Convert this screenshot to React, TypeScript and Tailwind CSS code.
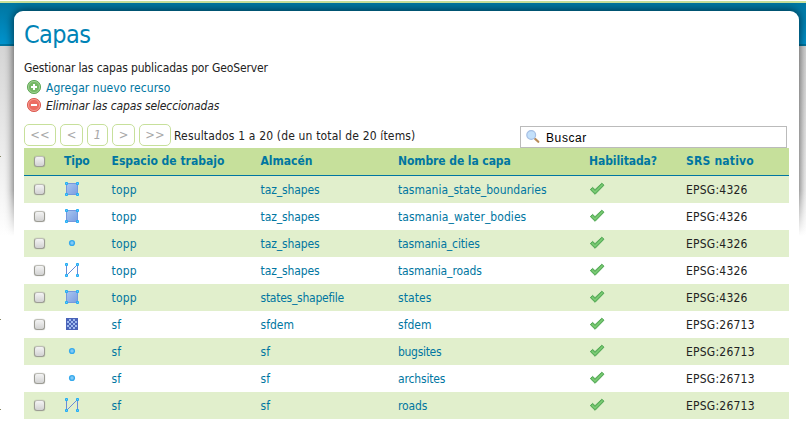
import React from "react";

type Kind = "polygon" | "point" | "line" | "raster";

const rows: [Kind, string, string, string, string, string, string][] = [
  ["polygon", "topp", "taz_shapes", "tasmania_state_boundaries", "EPSG:4326", "tracking-[-0.1px]", ""],
  ["polygon", "topp", "taz_shapes", "tasmania_water_bodies", "EPSG:4326", "tracking-[-0.1px]", "tracking-[0.05px]"],
  ["point", "topp", "taz_shapes", "tasmania_cities", "EPSG:4326", "tracking-[-0.1px]", "tracking-[-0.15px]"],
  ["line", "topp", "taz_shapes", "tasmania_roads", "EPSG:4326", "tracking-[-0.1px]", "tracking-[-0.12px]"],
  ["polygon", "topp", "states_shapefile", "states", "EPSG:4326", "tracking-[-0.25px]", "tracking-[0.1px]"],
  ["raster", "sf", "sfdem", "sfdem", "EPSG:26713", "", ""],
  ["point", "sf", "sf", "bugsites", "EPSG:26713", "", "tracking-[-0.3px]"],
  ["point", "sf", "sf", "archsites", "EPSG:26713", "", "tracking-[-0.15px]"],
  ["line", "sf", "sf", "roads", "EPSG:26713", "", "tracking-[-0.15px]"],
];

const corners = [
  [2.5, 2.5],
  [13.5, 2.5],
  [2.5, 13.5],
  [13.5, 13.5],
];

function Corners() {
  return (
    <>
      {corners.map(([x, y]) => (
        <rect key={`${x}-${y}`} x={x - 1.5} y={y - 1.5} width="3" height="3" rx="0.9" fill="#22adf5" />
      ))}
      {corners.map(([x, y]) => (
        <rect key={`c${x}-${y}`} x={x - 0.5} y={y - 0.5} width="1" height="1" fill="#6ccafa" />
      ))}
    </>
  );
}

function TypeIcon({ kind }: { kind: Kind }) {
  return (
    <svg className="block h-4 w-4" viewBox="0 0 16 16">
      <defs>
        <linearGradient id="area" x1="0" y1="0" x2="1" y2="1">
          <stop offset="0" stopColor="#a9c6f1" />
          <stop offset="1" stopColor="#7b9de0" />
        </linearGradient>
      </defs>
      {kind === "polygon" && (
        <>
          <rect x="2.5" y="2.5" width="11" height="11" fill="url(#area)" stroke="#7797dc" />
          <Corners />
        </>
      )}
      {kind === "line" && (
        <>
          <path d="M2.5 2.5V13.5L13.5 2.5V13.5" fill="none" stroke="#6a8bd6" strokeWidth="1" />
          <Corners />
        </>
      )}
      {kind === "point" && (
        <>
          <circle cx="8" cy="8" r="3.1" fill="#35a9ec" />
          <circle cx="8" cy="8" r="1.7" fill="#80c9f6" />
        </>
      )}
      {kind === "raster" && (
        <>
          <rect x="2" y="2" width="12" height="12" fill="#4a63b8" />
          {[0, 1, 2, 3, 4].map((r) =>
            [0, 1, 2, 3, 4].map((c) =>
              (r + c) % 2 === 1 ? (
                <rect key={`${r}${c}`} x={3 + c * 2} y={3 + r * 2} width="2" height="2" fill="#9eb9ee" />
              ) : null,
            ),
          )}
        </>
      )}
    </svg>
  );
}

function Check() {
  return (
    <svg className="block h-4 w-4" viewBox="0 0 16 16">
      <path d="M1.3 8.6 3.6 6.4 6 8.7 12.8 2.2 15 4.2 6.1 13.3Z" fill="#69bd65" stroke="#46a04b" strokeWidth="0.9" />
      <path d="M3 8.3 6 11.2 13.5 3.8" fill="none" stroke="#8bd681" strokeWidth="0.8" />
    </svg>
  );
}

function RoundIcon({ add }: { add: boolean }) {
  return (
    <svg className="block h-4 w-4 shrink-0" viewBox="0 0 16 16">
      <circle cx="8" cy="8" r="6.6" fill={add ? "#76b866" : "#ec6c62"} stroke={add ? "#5ba553" : "#d9564d"} strokeWidth="0.9" />
      <circle cx="8" cy="8" r="5.6" fill="none" stroke={add ? "#a9d69c" : "#f5a49a"} strokeWidth="0.8" />
      <path d={add ? "M8 5V11M5 8H11" : "M5 8H11"} stroke="#fff" strokeWidth="2" />
    </svg>
  );
}

function Box() {
  return (
    <span className="block h-[11px] w-[11px] rounded-[3px] border border-[#9c9c94] border-t-[#bdbdb6] bg-linear-to-b from-[#f4f4f4] to-[#d2d2d2] shadow-[0_0_1px_rgba(0,0,0,0.35)]" />
  );
}

function Pager({ label, size }: { label: string; size: string }) {
  return (
    <span
      className={`${size} flex h-[22px] items-center justify-center rounded-[5px] border border-[#c7e09b] pt-px text-[11.5px] text-[#a8a8a8] italic [font-family:'DejaVu_Sans',sans-serif] [font-stretch:normal]`}
    >
      {label}
    </span>
  );
}

const grid = "grid grid-cols-[40px_47.5px_149px_137.5px_191px_97px_1fr] items-center";

export default function App() {
  return (
    <div className="relative h-[424px] w-[806px] overflow-hidden bg-white font-['DejaVu_Sans_Condensed','DejaVu_Sans',sans-serif] [font-stretch:condensed] text-[12px] text-[#222]">
      <div className="absolute inset-x-0 top-0">
        <div className="mt-px h-[2px] bg-[#c8e09a]" />
        <div className="h-[41px] bg-linear-to-b from-[#0076a1] to-[#0093cd]" />
        <div className="h-[2px] bg-[#0076a1]" />
        <div className="h-[190px] bg-linear-to-b from-[#d5d5d5] to-white" />
      </div>
      <div className="absolute inset-0 mask-[linear-gradient(to_bottom,black_190px,transparent_236px)]">
        <div className="mt-[11px] ml-[14px] h-[420px] w-[785px] rounded-[9px] shadow-[0_0_8px_1px_rgba(0,0,0,0.6)]" />
      </div>
      <div className="absolute top-[156px] left-0 h-px w-px bg-[#8a8a68]" />
      <div className="absolute top-[319px] left-0 h-px w-px bg-[#8a8a68]" />
      <div className="absolute top-[409px] left-0 h-px w-px bg-[#8a8a68]" />

      <main className="relative mt-[11px] ml-[14px] h-[413px] w-[785px] rounded-t-[9px] bg-white pr-[10px] pl-[10px]">
        <h1 className="h-[48px] pt-[8px] text-[25px] leading-[32px] tracking-[-0.6px] text-[#0083b6]">Capas</h1>
        <p className="h-[19px] leading-[18px] tracking-[-0.13px]">Gestionar las capas publicadas por GeoServer</p>
        <div className="flex h-[18px] items-center gap-[4px] pl-[2px] text-[#0076a1]">
          <RoundIcon add />
          <span className="pt-px tracking-[0.05px]">Agregar nuevo recurso</span>
        </div>
        <div className="flex h-[18px] items-center gap-[4px] pl-[2px] italic">
          <RoundIcon add={false} />
          <span className="pt-px tracking-[-0.13px]">Eliminar las capas seleccionadas</span>
        </div>
        <div className="flex h-[34px] pt-[10px]">
          <div className="flex gap-[4px]">
            <Pager label="<<" size="w-[32px]" />
            <Pager label="<" size="w-[23px]" />
            <Pager label="1" size="w-[21px]" />
            <Pager label=">" size="w-[23px]" />
            <Pager label=">>" size="w-[32px]" />
          </div>
          <span className="ml-[3px] pt-px leading-[22px] tracking-[0.16px] whitespace-nowrap">Resultados 1 a 20 (de un total de 20 ítems)</span>
          <div className="mt-[2px] mr-[2px] ml-auto flex h-[22px] w-[267px] items-center border border-[#bbb] pl-[4px] font-['Liberation_Sans',sans-serif] text-[12px] tracking-[0.6px] text-black">
            <svg className="h-4 w-4" viewBox="0 0 16 16">
              <path d="M10 9.8 13.3 12.8" stroke="#b98a56" strokeWidth="2.2" strokeLinecap="round" />
              <circle cx="6.2" cy="6" r="4.4" fill="#c3e0fa" stroke="#a5bfe4" strokeWidth="1.2" />
            </svg>
            <span className="ml-[5px] pt-px">Buscar</span>
          </div>
        </div>

        <section>
          <div className={`${grid} h-[28px] border-b border-[#0076a1] bg-[#c6e09b] pb-px font-bold text-[#0076a1]`}>
            <span className="pt-px pl-[10px]"><Box /></span>
            <span className="tracking-[-0.2px]">Tipo</span>
            <span>Espacio de trabajo</span>
            <span>Almacén</span>
            <span className="tracking-[-0.08px]">Nombre de la capa</span>
            <span className="tracking-[-0.08px]">Habilitada?</span>
            <span className="tracking-[0.2px]">SRS nativo</span>
          </div>
          {rows.map(([kind, workspace, store, name, srs, storeFit, nameFit], i) => (
            <div key={i} className={`${grid} h-[27px] text-[#0076a1] ${i % 2 === 0 ? "bg-[#e1efcc]" : "bg-white"}`}>
              <span className="pl-[10px]"><Box /></span>
              <span className="-mt-px"><TypeIcon kind={kind} /></span>
              <span className="tracking-[0.2px]">{workspace}</span>
              <span className={storeFit}>{store}</span>
              <span className={nameFit}>{name}</span>
              <span className="-mt-px"><Check /></span>
              <span className="tracking-[0.22px] text-[#222]">{srs}</span>
            </div>
          ))}
        </section>
      </main>
    </div>
  );
}
